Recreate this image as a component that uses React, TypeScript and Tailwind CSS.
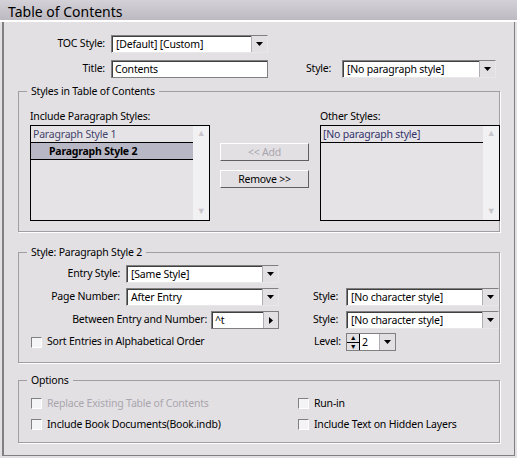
import React from 'react';

const Arrow = () => (
  <div className="w-[16px] h-full flex items-center justify-center bg-[#e3e0e4] border-l border-[#b0adb4]">
    <svg width="7" height="4" viewBox="0 0 7 4"><path d="M0 0h7L3.5 4z" fill="#000" /></svg>
  </div>
);

function Select({ value, w }: { value: string; w: string }) {
  return (
    <div className={`${w} h-[18px] flex bg-white border border-[#808080] border-r-[#e8e8e8] border-b-[#e8e8e8] shadow-[inset_1px_1px_0_#404040]`}>
      <span className="flex-1 pl-[4px] leading-[16px] truncate">{value}</span>
      <Arrow />
    </div>
  );
}

function Check({ label, disabled }: { label: string; disabled?: boolean }) {
  return (
    <div className={`flex items-center gap-[5px] ${disabled ? 'text-[#a8a6ac]' : ''}`}>
      <div className="w-[11px] h-[11px] bg-[#f4f3f5] border border-[#808080] border-r-white border-b-white" />
      <span>{label}</span>
    </div>
  );
}

function Group({ title, className, children }: { title: string; className: string; children: React.ReactNode }) {
  return (
    <div className={`relative mx-[14px] border border-[#a09ea4] shadow-[1px_1px_0_#fff] ${className}`}>
      <span className="absolute -top-[8px] left-[8px] px-[4px] bg-[#e3e0e4] leading-[14px]">{title}</span>
      {children}
    </div>
  );
}

function ListBox({ children }: { children?: React.ReactNode }) {
  return (
    <div className="w-[180px] h-[96px] flex bg-[#e6e3e7] border border-black">
      <div className="flex-1">{children}</div>
      <div className="w-[16px] flex flex-col justify-between bg-[#f1f0f2]">
        <div className="h-[16px] text-[9px] text-[#c8c6cc] text-center">▲</div>
        <div className="h-[16px] text-[9px] text-[#c8c6cc] text-center">▼</div>
      </div>
    </div>
  );
}

export default function App() {
  return (
    <div className="w-[517px] h-[458px] bg-[#e3e0e4] text-[10.5px] tracking-[-0.2px] text-black font-[Arial,'Liberation_Sans',sans-serif] flex flex-col">
      <div className="h-[22px] bg-gradient-to-b from-[#d4d2d8] to-[#bcbac0] pl-[8px] pt-[4px] text-[14px] tracking-normal leading-[16px] border-b-2 border-white">Table of Contents</div>
      <div className="flex-1 mx-[2px] mb-[2px] border-l-2 border-r border-b border-[#808080] flex flex-col">
        <div className="flex items-center mt-[13px] h-[18px]">
          <span className="w-[107px] text-right pr-[6px]">TOC Style:</span>
          <Select value="[Default] [Custom]" w="w-[157px]" />
        </div>
        <div className="flex items-center mt-[7px] h-[18px]">
          <span className="w-[107px] text-right pr-[6px]">Title:</span>
          <div className="w-[157px] h-[18px] bg-white border border-[#808080] shadow-[inset_1px_1px_0_#404040] pl-[3px] leading-[16px]">Contents</div>
          <span className="ml-[38px] w-[36px]">Style:</span>
          <Select value="[No paragraph style]" w="w-[154px]" />
        </div>
        <Group title="Styles in Table of Contents" className="mt-[13px] h-[141px] pt-[18px] pl-[11px]">
          <div className="flex">
            <div>
              <div className="mb-[3px] leading-[12px]">Include Paragraph Styles:</div>
              <ListBox>
                <div className="h-[17px] pl-[2px] leading-[17px] text-[#44446a] border-b border-black">Paragraph Style 1</div>
                <div className="h-[17px] pl-[18px] leading-[17px] font-bold bg-[#b8b7c6] border-b border-black">Paragraph Style 2</div>
              </ListBox>
            </div>
            <div className="ml-[10px] mt-[33px] flex flex-col gap-[9px]">
              <div className="w-[89px] h-[18px] text-center leading-[17px] text-[#a8a6ac] border border-white border-r-[#606060] border-b-[#606060]">&lt;&lt; Add</div>
              <div className="w-[89px] h-[18px] text-center leading-[17px] border border-white border-r-[#606060] border-b-[#606060]">Remove &gt;&gt;</div>
            </div>
            <div className="ml-[11px]">
              <div className="mb-[3px] leading-[12px]">Other Styles:</div>
              <ListBox>
                <div className="h-[17px] pl-[2px] leading-[17px] text-[#33336a] border-b border-black">[No paragraph style]</div>
              </ListBox>
            </div>
          </div>
        </Group>
        <Group title="Style: Paragraph Style 2" className="mt-[20px] h-[111px] pt-[12px]">
          <div className="flex items-center h-[18px]">
            <span className="w-[107px] text-right pr-[6px]">Entry Style:</span>
            <Select value="[Same Style]" w="w-[153px]" />
          </div>
          <div className="flex items-center h-[18px] mt-[5px]">
            <span className="w-[107px] text-right pr-[6px]">Page Number:</span>
            <Select value="After Entry" w="w-[153px]" />
            <span className="ml-[34px] w-[33px]">Style:</span>
            <Select value="[No character style]" w="w-[153px]" />
          </div>
          <div className="flex items-center h-[18px] mt-[5px]">
            <span className="w-[192px] text-right pr-[4px]">Between Entry and Number:</span>
            <div className="w-[68px] h-[18px] flex bg-white border border-[#808080] shadow-[inset_1px_1px_0_#404040]">
              <span className="flex-1 pl-[3px] leading-[16px]">^t</span>
              <div className="w-[15px] bg-[#e3e0e4] border-l border-[#b0adb4] flex items-center justify-center">
                <svg width="4" height="7"><path d="M0 0l4 3.5L0 7z" /></svg>
              </div>
            </div>
            <span className="ml-[34px] w-[33px]">Style:</span>
            <Select value="[No character style]" w="w-[153px]" />
          </div>
          <div className="flex items-center h-[18px] mt-[4px] pl-[12px]">
            <div className="w-[283px]"><Check label="Sort Entries in Alphabetical Order" /></div>
            <span className="w-[32px]">Level:</span>
            <div className="w-[50px] h-[18px] flex bg-white border border-[#808080]">
              <div className="w-[13px] flex flex-col border-r border-black bg-[#e3e0e4] text-[7px] leading-[8px] text-center">
                <span className="border-b border-black">▲</span><span>▼</span>
              </div>
              <span className="flex-1 pl-[2px] leading-[16px]">2</span>
              <Arrow />
            </div>
          </div>
        </Group>
        <Group title="Options" className="mt-[17px] h-[63px] pt-[15px] pl-[12px]">
          <div className="flex">
            <div className="w-[267px] flex flex-col gap-[5px]">
              <Check label="Replace Existing Table of Contents" disabled />
              <Check label="Include Book Documents(Book.indb)" />
            </div>
            <div className="flex flex-col gap-[5px]">
              <Check label="Run-in" />
              <Check label="Include Text on Hidden Layers" />
            </div>
          </div>
        </Group>
      </div>
    </div>
  );
}
